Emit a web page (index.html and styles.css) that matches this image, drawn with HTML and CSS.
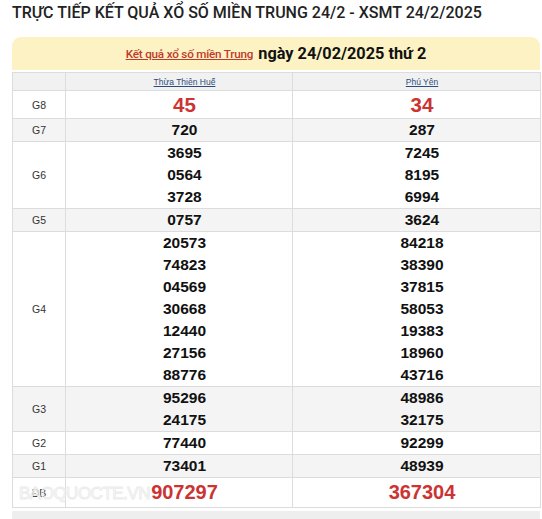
FILE: index.html
```html
<!DOCTYPE html>
<html lang="vi">
<head>
<meta charset="utf-8">
<link rel="stylesheet" href="styles.css">
</head>
<body>
<h1 class="title">TRỰC TIẾP KẾT QUẢ XỔ SỐ MIỀN TRUNG 24/2 - XSMT 24/2/2025</h1>
<div class="box">
  <div class="box-head"><a class="link" href="#">Kết quả xổ số miền Trung</a> <span class="date">ngày 24/02/2025 thứ 2</span></div>
  <table class="kq">
    <colgroup><col class="c1"><col class="c2"><col class="c3"></colgroup>
    <tr class="head"><th></th><th><a href="#">Thừa Thiên Huế</a></th><th><a href="#">Phú Yên</a></th></tr>
    <tr class="big"><td class="lb">G8</td><td class="n red"><div>45</div></td><td class="n red"><div>34</div></td></tr>
    <tr class="alt"><td class="lb">G7</td><td class="n"><div>720</div></td><td class="n"><div>287</div></td></tr>
    <tr><td class="lb">G6</td><td class="n"><div>3695</div><div>0564</div><div>3728</div></td><td class="n"><div>7245</div><div>8195</div><div>6994</div></td></tr>
    <tr class="alt"><td class="lb">G5</td><td class="n"><div>0757</div></td><td class="n"><div>3624</div></td></tr>
    <tr><td class="lb">G4</td><td class="n"><div>20573</div><div>74823</div><div>04569</div><div>30668</div><div>12440</div><div>27156</div><div>88776</div></td><td class="n"><div>84218</div><div>38390</div><div>37815</div><div>58053</div><div>19383</div><div>18960</div><div>43716</div></td></tr>
    <tr class="alt"><td class="lb">G3</td><td class="n"><div>95296</div><div>24175</div></td><td class="n"><div>48986</div><div>32175</div></td></tr>
    <tr><td class="lb">G2</td><td class="n"><div>77440</div></td><td class="n"><div>92299</div></td></tr>
    <tr class="alt"><td class="lb">G1</td><td class="n"><div>73401</div></td><td class="n"><div>48939</div></td></tr>
    <tr class="db"><td class="lb wm-cell">ĐB<span class="wm">BAOQUOCTE.VN</span></td><td class="n red"><div>907297</div></td><td class="n red"><div>367304</div></td></tr>
  </table>
  <div class="foot"></div>
</div>
</body>
</html>
```
FILE: styles.css
```css
html, body { margin: 0; padding: 0; background: #fff; }
body { font-family: "Liberation Sans", Arial, sans-serif; color: #111; }
.title {
  margin: 0;
  padding: 3px 0 0 12px;
  font-family: Roboto, "Liberation Sans", sans-serif;
  font-size: 16px;
  font-weight: 500;
  line-height: 20px;
  color: #222;
}
.box { margin: 14px 2px 0 12px; }
.box-head {
  background: #fcf2c4;
  border-radius: 9px 9px 0 0;
  height: 33px;
  display: flex;
  align-items: center;
  justify-content: center;
  gap: 5px;
  padding-left: 0;
}
.link {
  font-family: Roboto, "Liberation Sans", sans-serif;
  font-size: 11.7px;
  color: #c0392b;
  text-decoration: underline;
  font-weight: 500;
  letter-spacing: -0.2px;
}
.date {
  font-family: Roboto, "Liberation Sans", sans-serif;
  font-size: 16.3px;
  font-weight: 700;
  color: #111;
}
.kq {
  margin-top: 2px;
  width: 528px;
  border-collapse: collapse;
  table-layout: fixed;
  border-top: 1px solid #dcdcdc;
  border-left: 1px solid #dcdcdc;
  border-right: 1px solid #dcdcdc;
}
.c1 { width: 53px; }
.c2 { width: 227px; }
.c3 { width: 248px; }
.kq td, .kq th {
  padding: 0;
  border-bottom: 1px solid #dcdcdc;
  border-right: 1px solid #dcdcdc;
  text-align: center;
  vertical-align: middle;
}
.head th {
  height: 17px;
  background: #f1f1f1;
  font-weight: 400;
  font-size: 8.5px;
  padding-left: 11px;
}
.head th:first-child { padding-left: 0; }
.head a { color: #2b4d7e; text-decoration: underline; }
.lb { font-size: 10.5px; color: #333; }
.n { padding-left: 11px !important; font-size: 15.5px; font-weight: 700; color: #111; }
.n div { line-height: 22px; }
.alt td { background: #f4f4f4; }
.red { color: #cc3333 !important; }
.big .n div { font-size: 20.5px; line-height: 27px; }
.db .n div { font-size: 20px; line-height: 29px; }
.wm-cell { position: relative; }
.wm {
  position: absolute;
  left: 6px;
  top: 6px;
  font-size: 17px;
  font-weight: 400;
  color: rgba(0,0,0,0.02);
  -webkit-text-stroke: 1px #ececec;
  white-space: nowrap;
  letter-spacing: -0.5px;
}
.foot { height: 8px; margin-top: 3px; background: #eeeeee; }
```
